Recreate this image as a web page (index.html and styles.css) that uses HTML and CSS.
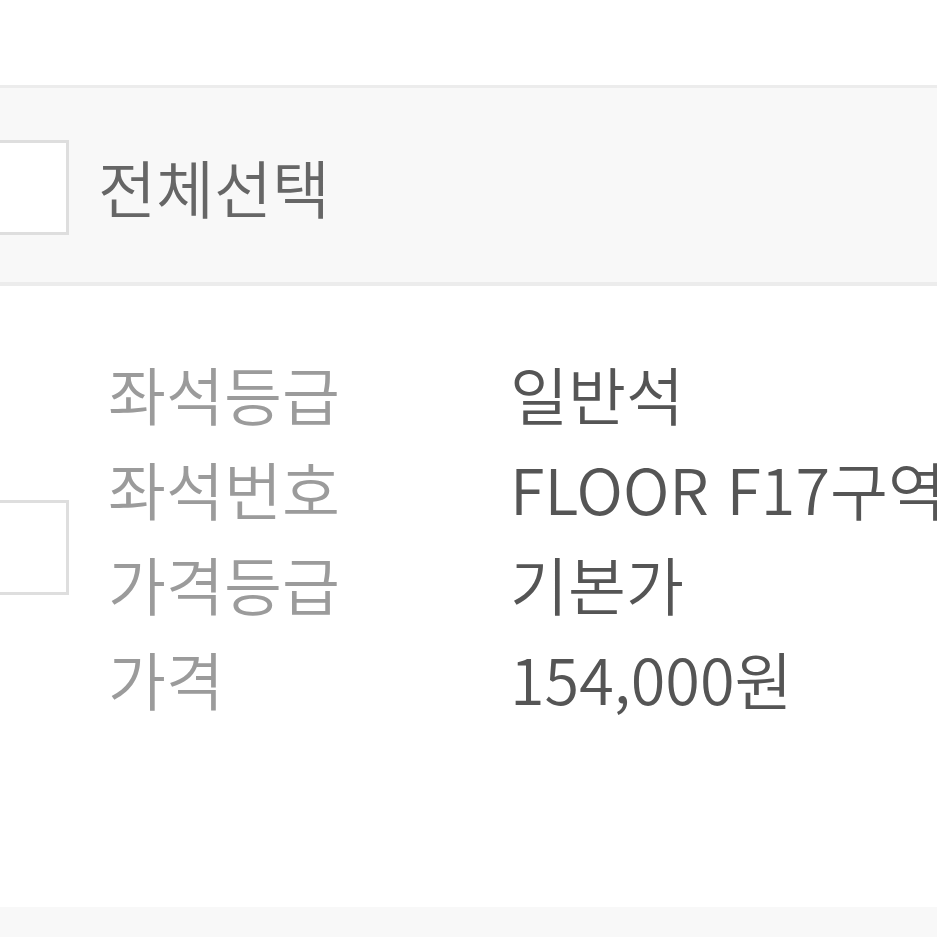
FILE: index.html
```html
<!DOCTYPE html>
<html lang="ko">
<head>
    <meta charset="UTF-8">
    <meta name="viewport" content="width=device-width, initial-scale=1.0">
    <title>좌석 선택</title>
    <link rel="stylesheet" href="styles.css">
</head>
<body>
<div class="top-space"></div>

<section class="select-all">
    <span class="check"></span>
    <span class="select-all-label">전체선택</span>
</section>

<section class="seat-item">
    <span class="check item-check"></span>
    <dl class="seat-info">
        <dt>좌석등급</dt>
        <dd>일반석</dd>
        <dt>좌석번호</dt>
        <dd>FLOOR F17구역</dd>
        <dt>가격등급</dt>
        <dd>기본가</dd>
        <dt>가격</dt>
        <dd>154,000원</dd>
    </dl>
</section>

<footer class="bottom-bar"></footer>
</body>
</html>
```

FILE: styles.css
```css
body {
    margin: 0;
    background-color: #fff;
    font-family: "Noto Sans CJK KR", "Noto Sans", sans-serif;
    font-weight: 350;
    overflow: hidden;
}

.top-space {
    height: 85px;
}

.check {
    display: block;
    flex: none;
    width: 89px;
    height: 89px;
    margin-left: -26px;
    border: 3px solid #dedede;
    background-color: #fff;
}

.select-all {
    display: flex;
    align-items: center;
    height: 194px;
    border-top: 3px solid #ececec;
    border-bottom: 4px solid #ececec;
    background-color: #f8f8f8;
}
.select-all .check {
    margin-top: 5px;
}
.select-all-label {
    margin-left: 29px;
    font-size: 63px;
    color: #666;
    white-space: nowrap;
}

.seat-item {
    display: flex;
    align-items: flex-start;
    height: 621px;
    padding-top: 59px;
    box-sizing: border-box;
}
.item-check {
    margin-top: 155px;
}

.seat-info {
    display: grid;
    grid-template-columns: 402px auto;
    grid-auto-rows: 95px;
    margin: 0 0 0 39px;
    font-size: 63px;
    line-height: 95px;
    white-space: nowrap;
}
.seat-info dt {
    color: #9b9b9b;
}
.seat-info dd {
    margin: 0;
    color: #555;
}

.bottom-bar {
    height: 40px;
    background-color: #f8f8f8;
}
```
